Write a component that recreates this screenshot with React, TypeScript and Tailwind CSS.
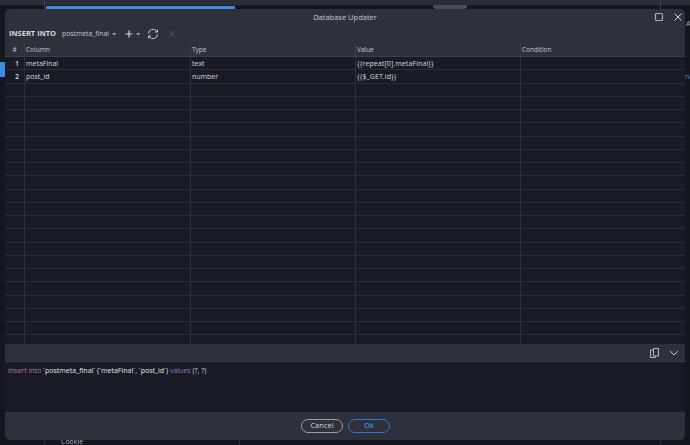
const rows = Array.from({ length: 22 }, (_, i) => i);
const data: Record<number, string[]> = {
  0: ["1", "metaFinal", "text", "{{repeat[0].metaFinal}}"],
  1: ["2", "post_id", "number", "{{$_GET.id}}"],
};

export default function App() {
  return (
    <div className="relative h-[445px] w-[690px] overflow-hidden bg-[#14161f] font-['Open_Sans',sans-serif]">
      <div className="h-[6px] border-b border-[#1a1c26] bg-[#2a2c38]" />
      <div className="ml-[46px] h-[3px] w-[189px] bg-[#3b8be0]" />
      <div className="absolute left-[433px] top-[5px] h-[4px] w-[34px] rounded-b-[3px] bg-[#4a4d59]" />
      <div className="absolute left-0 top-[62px] h-[15px] w-[5px] bg-[#3b8be0]" />
      <div className="absolute left-[44px] top-0 h-[9px] w-px bg-[#3c3f4b]" />
      <div className="absolute left-[660px] top-0 h-[9px] w-px bg-[#3c3f4b]" />
      <div className="absolute left-[44px] top-[440px] h-[5px] w-px bg-[#2b2e39]" />
      <div className="absolute left-[239px] top-[440px] h-[5px] w-px bg-[#2b2e39]" />
      <div className="absolute left-[660px] top-[440px] h-[5px] w-px bg-[#2b2e39]" />
      <div className="absolute left-[61px] top-[437px] text-[7px] leading-[10px] text-[#a9adb8]">Cookie</div>
      <div className="absolute left-[686px] top-[19px] text-[7px] text-[#a9adb8]">A</div>
      <div className="absolute left-[685px] top-[72px] text-[7px] text-[#3b8be0]">na</div>

      <div className="absolute left-[5px] top-[9px] flex h-[431px] w-[680px] flex-col overflow-hidden rounded-[5px] bg-[#2e303c] text-[#d5d7dd]">
        <div className="relative flex h-[15px] shrink-0 items-center justify-center pt-[2px] text-[7.5px] text-[#c6c8cf]">
          Database Updater
          <div className="absolute right-[2px] top-[3px] flex items-center gap-[9px]">
            <svg width="10" height="10" viewBox="0 0 10 10" fill="none" stroke="#a8abb5" strokeWidth="1.2">
              <rect x="1.500" y="1.500" width="7" height="7" rx="1" />
            </svg>
            <svg width="10" height="10" viewBox="0 0 10 10" fill="none" stroke="#d5d7dd" strokeWidth="1">
              <path d="M1.500 1.500l7 7M8.500 1.500l-7 7" />
            </svg>
          </div>
        </div>
        <div className="flex h-[18px] shrink-0 items-center pl-[4px] pt-[1px]">
          <span className="text-[7.5px] font-bold text-[#d8dade]">INSERT INTO</span>
          <span className="ml-[6px] mt-[1px] text-[6.8px] text-[#c3c6cf]">postmeta_final</span>
          <svg className="ml-[3px]" width="5" height="4" viewBox="0 0 5 4"><path d="M0 1h4.500L2.200 3.500z" fill="#9a9da8" /></svg>
          <svg className="ml-[7px]" width="10" height="10" viewBox="0 0 10 10" stroke="#d5d7dd" strokeWidth="1.200"><path d="M5 1.500v7M1.500 5h7" /></svg>
          <svg className="ml-[2px]" width="5" height="4" viewBox="0 0 5 4"><path d="M0 1h4.500L2.200 3.500z" fill="#9a9da8" /></svg>
          <svg className="ml-[6px]" width="12" height="12" viewBox="0 0 12 12" fill="none" stroke="#c8cad0" strokeWidth="1">
            <path d="M1.500 5.500A4.500 4.500 0 0 1 9.500 3l1 1M10.500 1.500V4H8M10.500 6.500A4.500 4.500 0 0 1 2.500 9l-1-1M1.500 10.500V8H4" />
          </svg>
          <svg className="ml-[9px]" width="8" height="8" viewBox="0 0 8 8" stroke="#4f525e" strokeWidth="1"><path d="M1 1l6 6M7 1L1 7" /></svg>
        </div>
        <div className="flex h-[15px] shrink-0 border-b border-[#3c3f4b] pt-[1px] text-[6.5px] text-[#c3c6cf]">
          <div className="flex w-[20px] items-center justify-center border-r border-[#3c3f4b]">#</div>
          <div className="flex w-[166px] items-center border-r border-[#3c3f4b] pl-[1px]">Column</div>
          <div className="flex w-[165px] items-center border-r border-[#3c3f4b] pl-[1px]">Type</div>
          <div className="flex w-[165px] items-center border-r border-[#3c3f4b] pl-[1px]">Value</div>
          <div className="flex flex-1 items-center pl-[1px]">Condition</div>
        </div>
        <div className="h-[287px] shrink-0 overflow-hidden bg-[#181a25]">
          {rows.map((i) => (
            <div key={i} className="flex h-[13.25px] border-b border-[#2a2c38] text-[7px] text-[#d8dade]">
              <div className="flex w-[20px] items-center justify-end border-r border-[#2e303c] pr-[5px] pt-[2px] font-semibold">{data[i]?.[0]}</div>
              <div className="flex w-[166px] items-center border-r border-[#2e303c] pl-[1px] pt-[2px]">{data[i]?.[1]}</div>
              <div className="flex w-[165px] items-center border-r border-[#2e303c] pl-[1px] pt-[2px]">{data[i]?.[2]}</div>
              <div className="flex w-[165px] items-center border-r border-[#2e303c] pl-[1px] pt-[2px] tracking-[0.1px]">{data[i]?.[3]}</div>
              <div className="flex-1" />
            </div>
          ))}
        </div>
        <div className="flex h-[18px] shrink-0 items-center justify-end gap-[9px] border-b border-[#3c3f4b] pr-[6px]">
          <svg width="11" height="12" viewBox="0 0 11 12" fill="none" stroke="#b5b8c0" strokeWidth="1">
            <path d="M4.500 1.500h5v7.500h-5zM4.500 3h-3v7.500h5V9" />
          </svg>
          <svg width="10" height="8" viewBox="0 0 10 8" fill="none" stroke="#c8cad0" strokeWidth="1"><path d="M1 2l4 4 4-4" /></svg>
        </div>
        <div className="h-[50px] shrink-0 bg-[#181a25] px-[3px] pt-[4px] text-[7px]">
          <span className="text-[#b47aa8]">insert into </span>
          <span className="text-[#e6e7ea]">`postmeta_final` (`metaFinal`, `post_id`) </span>
          <span className="text-[#8d7cc0]">values </span>
          <span className="text-[#d0d2d8]">(?, ?)</span>
        </div>
        <div className="flex flex-1 items-center justify-end gap-[5px] pr-[295px]">
          <button className="flex h-[14px] w-[42px] items-center justify-center rounded-full border border-[#9a9da8] text-[7.5px] text-[#d5d7dd]">Cancel</button>
          <button className="flex h-[14px] w-[42px] items-center justify-center rounded-full border border-[#2f78d0] text-[7.5px] font-semibold text-[#3b8be0]">Ok</button>
        </div>
      </div>
    </div>
  );
}
